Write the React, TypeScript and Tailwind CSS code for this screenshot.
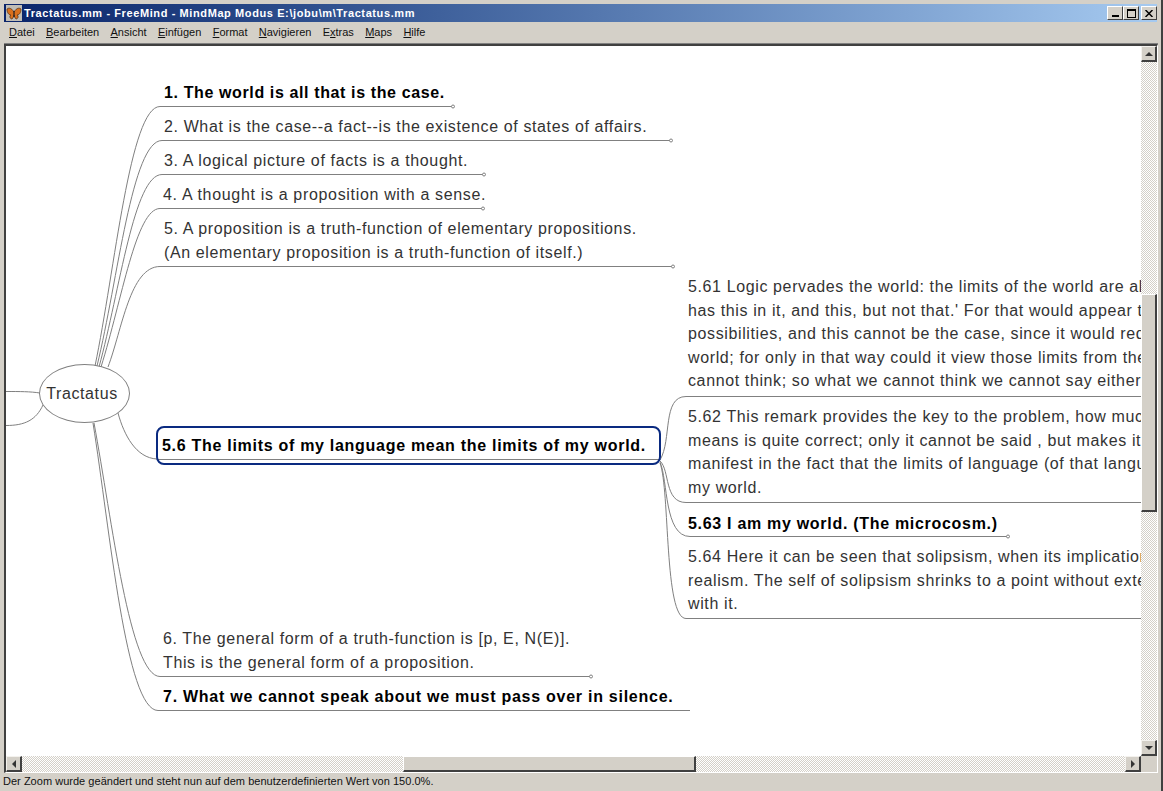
const canvasFont = { fontFamily: '"Liberation Sans", Arial, sans-serif' };

function Underlined({ label, u }: { label: string; u: number }) {
  return (
    <span>
      {label.slice(0, u)}
      <span className="underline">{label[u]}</span>
      {label.slice(u + 1)}
    </span>
  );
}

const MENU: [string, number][] = [
  ['Datei', 0],
  ['Bearbeiten', 0],
  ['Ansicht', 0],
  ['Einfügen', 0],
  ['Format', 0],
  ['Navigieren', 0],
  ['Extras', 1],
  ['Maps', 0],
  ['Hilfe', 0],
];

function WinButton({ children, className = '' }: { children: React.ReactNode; className?: string }) {
  return (
    <div
      className={`flex h-[14px] w-4 items-center justify-center border border-t-white border-l-white border-r-[#404040] border-b-[#404040] bg-[#d4d0c8] ${className}`}
    >
      {children}
    </div>
  );
}

function ScrollButton({ dir }: { dir: 'up' | 'down' | 'left' | 'right' }) {
  const points = {
    up: '0,4 8,4 4,0',
    down: '0,0 8,0 4,4',
    left: '4,0 4,8 0,4',
    right: '0,0 0,8 4,4',
  }[dir];
  const box = dir === 'up' || dir === 'down' ? '0 0 8 4' : '0 0 4 8';
  const size = dir === 'up' || dir === 'down' ? 'h-1 w-2' : 'h-2 w-1';
  return (
    <div className="flex h-4 w-4 shrink-0 items-center justify-center border border-t-[#f4f2ee] border-l-[#f4f2ee] border-r-2 border-b-2 border-r-[#404040] border-b-[#404040] bg-[#d4d0c8]">
      <svg viewBox={box} className={size}>
        <polygon points={points} fill="#333" />
      </svg>
    </div>
  );
}

const dither =
  'bg-[repeating-conic-gradient(#d4d0c8_0_25%,#ffffff_0_50%)] bg-[length:2px_2px]';

type NodeProps = { x: number; y: number; lines: string[]; bold?: boolean; tall?: boolean; track?: string };

function MapNode({ x, y, lines, bold, tall, track }: NodeProps) {
  return (
    <div
      className={`absolute whitespace-pre text-[16px] ${tall ? 'leading-[23.5px]' : 'leading-[24px]'} ${track ?? 'tracking-[0.62px]'} ${bold ? 'font-bold text-black' : 'text-[#333]'}`}
      style={{ left: x, top: y }}
    >
      {lines.map((l) => (
        <div key={l}>{l}</div>
      ))}
    </div>
  );
}

// node text, coordinates relative to the white canvas (origin 6,46)
const NODES: NodeProps[] = [
  { x: 158, y: 35, lines: ['1. The world is all that is the case.'], bold: true },
  { x: 158, y: 69, lines: ['2. What is the case--a fact--is the existence of states of affairs.'] },
  { x: 158, y: 103, lines: ['3. A logical picture of facts is a thought.'], track: 'tracking-[0.64px]' },
  { x: 157, y: 137, lines: ['4. A thought is a proposition with a sense.'], track: 'tracking-[0.67px]' },
  {
    x: 158,
    y: 171,
    lines: ['5. A proposition is a truth-function of elementary propositions.', '(An elementary proposition is a truth-function of itself.)'],
  },
  {
    x: 682,
    y: 229,
    tall: true,
    lines: [
      '5.61 Logic pervades the world: the limits of the world are also',
      "has this in it, and this, but not that.' For that would appear to",
      'possibilities, and this cannot be the case, since it would require',
      'world; for only in that way could it view those limits from the',
      'cannot think; so what we cannot think we cannot say either.',
    ],
  },
  {
    x: 682,
    y: 359,
    tall: true,
    lines: [
      '5.62 This remark provides the key to the problem, how much',
      'means is quite correct; only it cannot be said , but makes itself',
      'manifest in the fact that the limits of language (of that language',
      'my world.',
    ],
  },
  { x: 682, y: 466, lines: ['5.63 I am my world. (The microcosm.)'], bold: true, track: 'tracking-[0.7px]' },
  {
    x: 682,
    y: 499,
    tall: true,
    lines: [
      '5.64 Here it can be seen that solipsism, when its implications',
      'realism. The self of solipsism shrinks to a point without extension',
      'with it.',
    ],
  },
  { x: 157, y: 581, lines: ['6. The general form of a truth-function is [p, E, N(E)].', 'This is the general form of a proposition.'] },
  { x: 157, y: 639, lines: ['7. What we cannot speak about we must pass over in silence.'], bold: true, track: 'tracking-[0.74px]' },
];

function Edges() {
  // coordinates in window space, svg is offset by the canvas origin
  return (
    <svg className="absolute left-[-6px] top-[-46px]" width="1163" height="791" fill="none" stroke="#808080" strokeWidth="1">
      {/* left side of root */}
      <path d="M6 391.5 C20 391.5 30 391.5 40 393" />
      <path d="M6 425.5 C25 425.5 36 420 43 405" />
      {/* upper branches */}
      <path d="M95 366 C115 270 130 106.5 160 106.5 H453" />
      <path d="M97 366 C118 280 132 140.5 162 140.5 H671" />
      <path d="M99 367 C120 290 134 174.5 162 174.5 H484" />
      <path d="M101 367 C122 300 136 208.5 160 208.5 H483" />
      <path d="M108 367 C122 330 130 266.5 160 266.5 H673" />
      {/* lower branches */}
      <path d="M94 423 C112 520 130 676.5 160 676.5 H591" />
      <path d="M93 423 C110 530 126 710.5 158 710.5 H690" />
      {/* selected node */}
      <path d="M118 413 C124 435 136 458 157 459" />
      <path d="M158 459.5 H659" />
      {/* right children of 5.6 */}
      <path d="M660 460 C672 440 662 396.5 686 396.5 H1141" />
      <path d="M660 461 C670 470 664 502.5 686 502.5 H1141" />
      <path d="M660 462 C668 480 664 536.5 690 536.5 H1008" />
      <path d="M660 463 C670 490 664 618.5 686 618.5 H1141" />
      {/* fold markers */}
      <circle cx="453" cy="106.5" r="1.5" fill="#fff" />
      <circle cx="671" cy="140.5" r="1.5" fill="#fff" />
      <circle cx="484" cy="174.5" r="1.5" fill="#fff" />
      <circle cx="483" cy="208.5" r="1.5" fill="#fff" />
      <circle cx="673" cy="266.5" r="1.5" fill="#fff" />
      <circle cx="591" cy="676.5" r="1.5" fill="#fff" />
      <circle cx="1008" cy="536.5" r="1.5" fill="#fff" />
    </svg>
  );
}

export default function App() {
  return (
    <div
      className="flex h-[791px] w-[1163px] flex-col overflow-hidden border-r-2 border-r-[#404040] bg-[#d4d0c8] pl-1 pr-[3px] pt-1"
      style={canvasFont}
    >
      {/* Title bar */}
      <div className="mr-[1px] flex h-[18px] shrink-0 items-center bg-gradient-to-r from-[#0a246a] to-[#a6caf0] pl-[2px] text-[11px] font-bold text-white">
        <div className="mr-[2px] flex h-4 w-4 items-center justify-center bg-[#c0bdb5]">
          <svg viewBox="0 0 16 16" className="h-4 w-4">
            <path d="M8 7 C5 2 2 3 1 4 C1 8 3 10 5 10 C3 11 4 14 6 14 C7 13 8 11 8 10 C8 11 9 13 10 14 C12 14 13 11 11 10 C13 10 15 8 15 4 C14 3 11 2 8 7 Z" fill="#d9701c" stroke="#4a2a10" strokeWidth="0.7" />
            <rect x="7.4" y="6" width="1.2" height="6" fill="#222" />
          </svg>
        </div>
        <span className="grow whitespace-pre tracking-[0.6px]">Tractatus.mm - FreeMind - MindMap Modus E:\jobu\m\Tractatus.mm</span>
        <WinButton>
          <div className="mt-[6px] h-[2px] w-[7px] bg-black" />
        </WinButton>
        <WinButton>
          <div className="h-[9px] w-[9px] border border-t-2 border-black" />
        </WinButton>
        <WinButton className="ml-[2px]">
          <svg viewBox="0 0 8 7" className="h-[7px] w-2" stroke="#000" strokeWidth="1.5">
            <path d="M0.5 0 L7.5 7 M7.5 0 L0.5 7" />
          </svg>
        </WinButton>
      </div>

      {/* Menu bar */}
      <div className="flex h-[22px] shrink-0 items-center gap-[11.3px] border-b border-b-[#808080] pl-[5px] text-[11px] text-[#111]">
        {MENU.map(([label, u]) => (
          <Underlined key={label} label={label} u={u} />
        ))}
      </div>

      {/* Canvas + scrollbars */}
      <div className="flex min-h-0 grow flex-col border-b border-l-2 border-r border-t-2 border-b-white border-l-[#404040] border-r-white border-t-[#404040]">
        <div className="flex min-h-0 grow">
          <div className="relative grow overflow-hidden bg-white" style={canvasFont}>
            <Edges />
            {/* Root node */}
            <div className="absolute left-[33px] top-[318px] flex h-[59px] w-[91px] items-center justify-center rounded-[50%] border border-[#808080] bg-white pr-[5px] pt-[1px] text-[16px] tracking-[0.6px] text-[#333]">
              Tractatus
            </div>
            {/* Selected node */}
            <div className="absolute left-[150px] top-[380px] h-[39px] w-[505px] rounded-[8px] border-2 border-[#0a2a80]" />
            <div className="absolute left-[156px] top-[388px] whitespace-pre text-[16px] font-bold leading-[24px] tracking-[0.71px] text-black">
              5.6 The limits of my language mean the limits of my world.
            </div>
            {NODES.map((n) => (
              <MapNode key={n.lines[0]} {...n} />
            ))}
          </div>
          {/* Vertical scrollbar */}
          <div className={`flex w-4 shrink-0 flex-col ${dither}`}>
            <ScrollButton dir="up" />
            <div className="mt-[232px] h-[218px] w-4 border border-r-2 border-b-2 border-t-white border-l-white border-r-[#404040] border-b-[#404040] bg-[#d4d0c8]" />
            <div className="grow" />
            <ScrollButton dir="down" />
          </div>
        </div>
        {/* Horizontal scrollbar */}
        <div className="flex h-4 shrink-0">
          <div className={`flex grow ${dither}`}>
            <ScrollButton dir="left" />
            <div className="ml-[381px] h-4 w-[293px] border border-r-2 border-b-2 border-t-white border-l-white border-r-[#404040] border-b-[#404040] bg-[#d4d0c8]" />
            <div className="grow" />
            <ScrollButton dir="right" />
          </div>
          <div className="w-4 bg-[#d4d0c8]" />
        </div>
      </div>

      {/* Status bar */}
      <div className="-ml-[1px] flex h-[18px] shrink-0 items-center pb-[1px] text-[11px] tracking-[0.025px] text-[#111]">
        Der Zoom wurde geändert und steht nun auf dem benutzerdefinierten Wert von 150.0%.
      </div>
    </div>
  );
}
